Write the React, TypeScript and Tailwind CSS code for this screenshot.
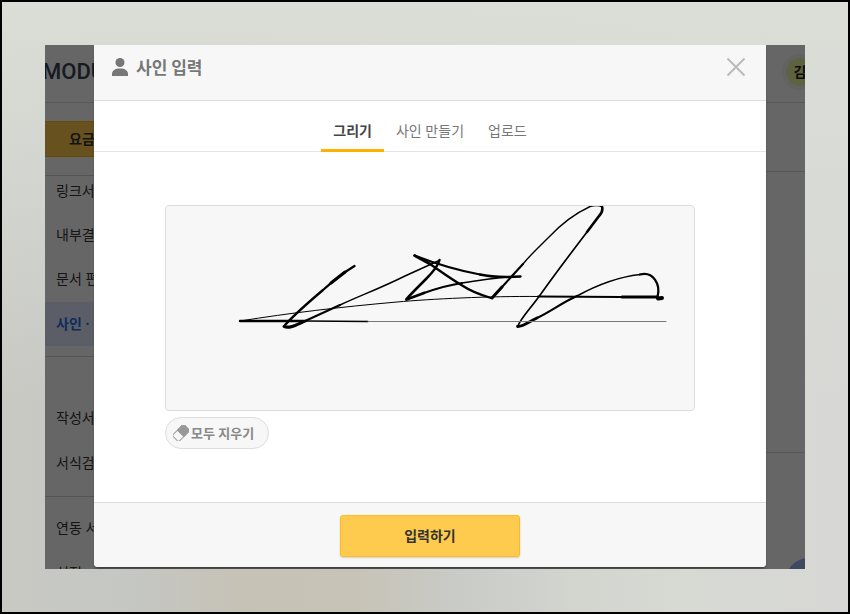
import type { ReactNode } from "react";

function NavItem({ children, active = false }: { children: ReactNode; active?: boolean }) {
  return (
    <li>
      <a
        href="#"
        aria-current={active ? "page" : undefined}
        className={
          active
            ? "flex h-11 items-center bg-[#e4eaff] pl-[11px] font-bold text-[#2a6ee8]"
            : "flex h-11 items-center pb-0.5 pl-[11px] text-[#333333]"
        }
      >
        {children}
      </a>
    </li>
  );
}

function Signature() {
  return (
    <svg
      role="img"
      aria-label="사인"
      viewBox="166 206 528 204"
      className="block w-full"
      fill="none"
      stroke="#000"
      strokeLinecap="round"
      strokeLinejoin="round"
    >
      <path strokeWidth="2.300" d="M354.500 266 C343 273 333 281 323 290 C310 301 296 313 285 325" />
      <path strokeWidth="3" d="M345 272 L331 283" />
      <path strokeWidth="3" d="M284 326.500 C289 329 296 325 304 321.500" />
      <path strokeWidth="2" d="M304 321.500 L340 305" />
      <path strokeWidth="1.400" d="M340 305 C362 295 383 287 405 276 L438 261" />
      <path strokeWidth="2.500" d="M439.500 260 C438 266 433 272 426 279 C419 286 411 294 406.500 299" />
      <path strokeWidth="2.800" d="M406.500 299.500 L424 293" />
      <path strokeWidth="2.200" d="M424 293 C438 288 449 285 462 283" />
      <path strokeWidth="1.600" d="M462 283 C480 280 495 278 508 277" />
      <path strokeWidth="2.400" d="M520.500 276.500 C505 277.500 491 277 480 274.500" />
      <path strokeWidth="2" d="M480 274.500 C461 271 439 265 414.500 255.500" />
      <path strokeWidth="2.600" d="M414.500 255.500 L430 264" />
      <path strokeWidth="2.300" d="M430 264 C443 273 451 279 463 286 C472 292 481 295 491 298" />
      <path strokeWidth="3" d="M492 298 L502 287" />
      <path strokeWidth="2.100" d="M502 287 L523 264" />
      <path strokeWidth="1.400" d="M523 264 C532 253 541 245 549 237 C563 222 576 213 590 206.500 C594 205.500 599 205.500 602 206.500" />
      <path strokeWidth="2.600" d="M602 206.500 C603 210 602 213 599 216 L587 232" />
      <path strokeWidth="1.700" d="M587 232 C571 253 558 270 543 291 C532 307 520 319 518 326" />
      <path strokeWidth="2.800" d="M517.500 326.500 C523 327 530 321 537 318" />
      <path strokeWidth="2.200" d="M537 318 C550 312 563 302 577 296" />
      <path strokeWidth="1.500" d="M577 296 C597 285 618 277 640 274.500" />
      <path strokeWidth="2.300" d="M640 274.500 C653 271 661 284 657.500 297" />
      <path strokeWidth="4" d="M658 298.500 L662 298" />
      <path strokeWidth="3" d="M657 297 L622 297" />
      <path strokeWidth="1.800" d="M622 297 L538 296.500" />
      <path strokeWidth="1" d="M538 296.500 C490 296 430 299 397 302 C340 307 290 313 240 321" />
      <path strokeWidth="2.400" d="M240 321 L306 321" />
      <path strokeWidth="1.400" d="M306 321 L368 321.500" />
      <path strokeWidth="1" stroke="#777" d="M368 321.500 H666" />
    </svg>
  );
}

function EraserIcon() {
  return (
    <svg viewBox="0 0 16 16" className="size-4" aria-hidden="true">
      <g transform="rotate(-45 8 8)">
        <rect x="0" y="3.500" width="16" height="9" rx="1.500" fill="#f7f7f7" stroke="#999" />
        <path d="M7 3h8a1.500 1.500 0 0 1 1.500 1.500v7a1.500 1.500 0 0 1-1.500 1.500H7z" fill="#999" />
      </g>
    </svg>
  );
}

export default function App() {
  return (
    <div className="flex h-screen flex-col border-2 border-black bg-[linear-gradient(to_bottom,#dbded7_0%,#dadcd799_30%,transparent_65%),linear-gradient(to_right,#c8c9c3_0%,#c5c7c3_15%,#c6c2b6_28%,#c7c3b7_42%,#c9cbc7_54%,#d2d6cf_68%,#d7d9d3_80%,#d7d8d5_100%)] p-[43px] font-['Noto_Sans','Noto_Sans_CJK_KR',sans-serif] text-sm">
      <div className="relative flex min-h-0 flex-1 flex-col overflow-hidden bg-white">
        <header className="flex h-[58px] shrink-0 items-center justify-between border-b border-[#dddddd] pb-1">
          <span className="-ml-[3px] font-[Roboto,sans-serif] text-[22px] font-medium text-[#3c4257]">MODU</span>
          <span className="-mr-[13px] flex size-9 items-center justify-center rounded-full bg-[#f3f5f5]">
            <span className="flex size-7 items-center justify-center rounded-full bg-[#e8f5a4] font-bold text-[#222222]">
              김
            </span>
          </span>
        </header>
        <div className="flex min-h-0 flex-1">
          <nav className="w-52 shrink-0 pt-[18px]">
            <button className="flex h-9 w-full items-center border-y border-[#ffb70f] bg-[#ffcb4f] pl-6 font-bold text-[#333333]">
              요금
            </button>
            <ul className="mt-[18px] border-t border-[#d5d5d5] pb-2.5 *:first:-mt-1.5">
              <NavItem>링크서</NavItem>
              <NavItem>내부결</NavItem>
              <NavItem>문서 편</NavItem>
              <NavItem active>사인 ·</NavItem>
            </ul>
            <ul className="flex flex-col gap-px border-t border-[#d5d5d5] pt-10 pb-2.5">
              <NavItem>작성서</NavItem>
              <NavItem>서식검</NavItem>
            </ul>
            <ul className="flex flex-col gap-px border-t border-[#d5d5d5] pt-2.5">
              <NavItem>연동 서</NavItem>
              <NavItem>설정</NavItem>
            </ul>
          </nav>
          <main className="flex-1">
            <div className="h-[69px] border-b border-[#dddddd]" />
            <div className="h-[281px] border-b border-[#dddddd]" />
          </main>
        </div>
        <span className="absolute -right-7 -bottom-[37px] size-12 rounded-full bg-[#9ab4f5]" />

        <div className="absolute inset-0 flex flex-col bg-black/60 pr-[39px] pb-0.5 pl-[49px]">
          <section
            role="dialog"
            aria-label="사인 입력"
            className="flex flex-1 flex-col overflow-hidden rounded-b-sm bg-white shadow-[0_3px_3px_-1px_rgba(0,0,0,0.4)]"
          >
            <div className="flex h-14 items-center justify-between border-b border-[#dddddd] bg-[#f7f7f7] pr-5 pb-[11px] pl-[18px]">
              <h1 className="flex items-center gap-2 font-['Noto_Sans_CJK_KR',sans-serif] text-[17px] font-bold text-[#777777]">
                <svg viewBox="0 0 16 18" className="h-[18px] w-4" fill="#777" aria-hidden="true">
                  <circle cx="8" cy="4.500" r="4.500" />
                  <path d="M0 18v-2C0 12.500 3 10.500 8 10.500s8 2 8 5.500V18z" />
                </svg>
                사인 입력
              </h1>
              <button aria-label="닫기">
                <svg viewBox="0 0 20 20" className="size-5" stroke="#bbb" strokeWidth="2" aria-hidden="true">
                  <path d="M1.500 1.500l17 17M18.500 1.500l-17 17" />
                </svg>
              </button>
            </div>
            <div role="tablist" className="flex h-[51px] justify-center border-b border-[#e5e5e5] text-[#777777]">
              <button role="tab" aria-selected="true" className="-mb-px border-b-3 border-[#ffb100] px-3 pt-4 pb-1 font-bold text-[#444444]">
                그리기
              </button>
              <button role="tab" aria-selected="false" className="px-3 pt-4 pb-1.5">사인 만들기</button>
              <button role="tab" aria-selected="false" className="px-3 pt-4 pb-1.5">업로드</button>
            </div>
            <div className="flex flex-1 flex-col items-start px-[71px] pt-[53px]">
              <div className="w-full overflow-hidden rounded border border-[#dddddd] bg-[#f7f7f7]">
                <Signature />
              </div>
              <button className="mt-1.5 flex h-8 items-center gap-0.5 rounded-full border border-[#dddddd] bg-[#f7f7f7] pr-3.5 pl-[7px] text-[13px] font-bold text-[#888888]">
                <EraserIcon />
                모두 지우기
              </button>
            </div>
            <div className="flex justify-center border-t border-[#dddddd] bg-[#f7f7f7] pt-3 pb-2.5">
              <button className="h-[42px] w-[180px] rounded-[3px] border border-[#ffb923] bg-[#ffcb4f] font-bold text-[#333333] shadow-[0_1px_2px_rgba(0,0,0,0.15)]">
                입력하기
              </button>
            </div>
          </section>
        </div>
      </div>
    </div>
  );
}
